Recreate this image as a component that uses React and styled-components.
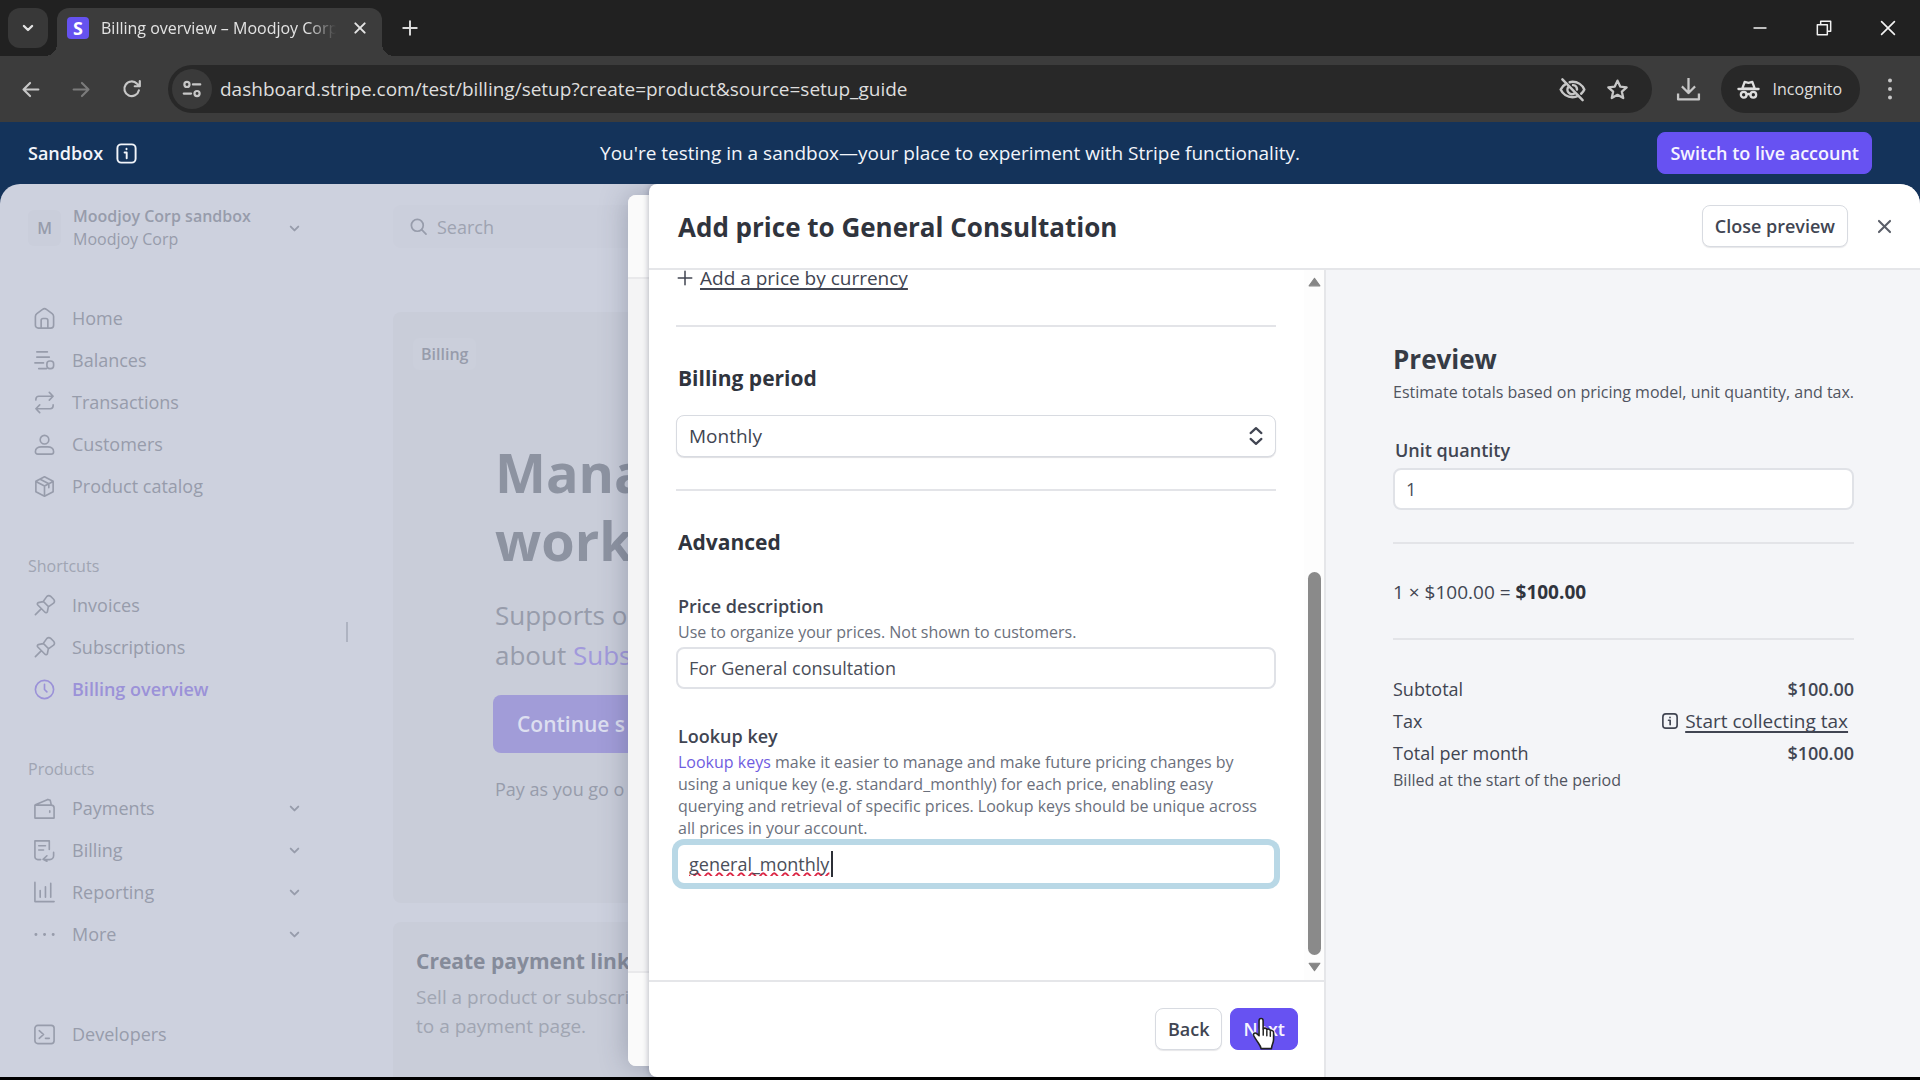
import React from "react";
import styled, { createGlobalStyle, css } from "styled-components";

const GlobalStyle = createGlobalStyle`
  *, *::before, *::after { box-sizing: border-box; }
  html, body { margin: 0; height: 100%; background: #000; }
  body, button, input, select {
    font-family: "Open Sans", "Noto Sans", sans-serif;
    font-size: 18px;
    line-height: 24px;
  }
  button, input, select { margin: 0; }
  h1, h2, h3, p, ul { margin: 0; padding: 0; }
  ul { list-style: none; }
  a { color: inherit; text-decoration: none; }
`;

const Svg = styled.svg.attrs({ "aria-hidden": true })`
  width: ${(p) => p.$size || 24}px;
  height: ${(p) => p.$size || 24}px;
  flex: none;
  display: block;
  fill: none;
  stroke: currentColor;
  stroke-width: ${(p) => p.$stroke || 2};
  stroke-linecap: ${(p) => p.$cap || "round"};
  stroke-linejoin: round;
`;

const Window = styled.div`
  height: 100vh;
  min-height: 720px;
  display: flex;
  flex-direction: column;
  overflow: hidden;
  border-bottom: 3px solid #000;
  background: #14335a;
`;

/* ---------- browser frame ---------- */

const IconButton = styled.button`
  display: grid;
  place-items: center;
  flex: none;
  width: ${(p) => p.$size || 40}px;
  height: ${(p) => p.$size || 40}px;
  padding: 0;
  border: 0;
  border-radius: ${(p) => p.$radius || 20}px;
  background: ${(p) => p.$bg || "transparent"};
  color: ${(p) => p.$color || "#c7c7c7"};
`;

const TabStrip = styled.div`
  flex: none;
  height: 56px;
  display: flex;
  align-items: flex-start;
  padding: 8px 0 0 8px;
  background: #212121;
`;

const Tab = styled.div`
  position: relative;
  display: flex;
  align-items: center;
  gap: 12px;
  width: 325px;
  height: 48px;
  margin: 0 8px 0 9px;
  padding: 0 10px 8px 10px;
  border-radius: 12px 12px 0 0;
  background: #3c3c3c;
  &::before,
  &::after {
    content: "";
    position: absolute;
    bottom: 0;
    width: 12px;
    height: 12px;
  }
  &::before {
    left: -12px;
    background: radial-gradient(circle at 0 0, transparent 12px, #3c3c3c 12px);
  }
  &::after {
    right: -12px;
    background: radial-gradient(circle at 100% 0, transparent 12px, #3c3c3c 12px);
  }
`;

const Favicon = styled.span`
  display: grid;
  place-items: center;
  flex: none;
  width: 22px;
  height: 22px;
  border-radius: 4px;
  background: #6552f0;
  color: #fff;
  font-size: 18px;
  font-weight: 700;
  line-height: 20px;
`;

const TabTitle = styled.span`
  flex: 1;
  overflow: hidden;
  white-space: nowrap;
  color: #e3e3e3;
  font-size: 16px;
  mask-image: linear-gradient(90deg, #000 88%, transparent);
`;

const WindowControls = styled.div`
  display: flex;
  gap: 24px;
  margin-left: auto;
  padding-right: 12px;
`;

const Toolbar = styled.div`
  flex: none;
  height: 66px;
  display: flex;
  align-items: center;
  padding: 0 10px;
  background: #3c3c3c;
`;

const NavButtons = styled.div`
  display: flex;
  gap: 11px;
  margin-right: 16px;
`;

const Omnibox = styled.div`
  flex: 1;
  min-width: 0;
  display: flex;
  align-items: center;
  height: 48px;
  margin-right: 13px;
  padding: 0 12px 0 4px;
  border-radius: 24px;
  background: #282828;
`;

const Address = styled.input`
  flex: 1;
  min-width: 0;
  padding: 0 0 0 8px;
  border: 0;
  outline: 0;
  background: transparent;
  color: #dedede;
  font-size: 19px;
`;

const Incognito = styled.button`
  display: flex;
  align-items: center;
  gap: 13px;
  height: 48px;
  margin: 0 10px 0 8px;
  padding: 0 18px 0 16px;
  border: 0;
  border-radius: 24px;
  background: #282828;
  color: #dedede;
  font-size: 16px;
`;

/* ---------- sandbox banner ---------- */

const Banner = styled.div`
  flex: none;
  height: 62px;
  display: grid;
  grid-template-columns: 1fr auto 1fr;
  align-items: center;
  padding: 0 48px 0 28px;
  color: #f2f5fa;
  font-size: 19px;
`;

const BannerTag = styled.div`
  display: flex;
  align-items: center;
  gap: 12px;
  font-size: 18px;
  font-weight: 600;
`;

const Button = styled.button`
  height: 42px;
  padding: 0 12px;
  border: 1px solid #d8dbe1;
  border-radius: 8px;
  background: #fff;
  color: #414552;
  font-weight: 600;
  white-space: nowrap;
  box-shadow: 0 1px 1px rgba(20, 20, 40, 0.1);
  ${(p) =>
    p.$primary &&
    css`
      border-color: #6752f2;
      background: #6752f2;
      color: #f6f4ff;
      box-shadow: none;
    `}
`;

const BannerAction = styled.div`
  justify-self: end;
`;

/* ---------- dashboard behind the drawers ---------- */

const Stage = styled.div`
  position: relative;
  flex: 1;
  min-height: 0;
  display: grid;
  grid-template-columns: 332px 1fr;
  overflow: hidden;
  border-radius: 20px 20px 0 0;
  background: #cdd1de;
  color: #979cab;
`;

const Sidebar = styled.nav`
  position: relative;
  display: flex;
  flex-direction: column;
  padding: 21px 24px 22px 28px;
`;

const Resizer = styled.span`
  position: absolute;
  right: -16px;
  top: 49%;
  width: 2px;
  height: 20px;
  background: #aeb3c1;
`;

const Account = styled.button`
  display: flex;
  align-items: center;
  gap: 12px;
  padding: 0;
  border: 0;
  background: transparent;
  color: inherit;
  text-align: left;
  margin-bottom: 46px;
`;

const Avatar = styled.span`
  display: grid;
  place-items: center;
  width: 33px;
  height: 36px;
  border-radius: 6px;
  background: #cacedb;
  font-size: 16px;
  font-weight: 600;
`;

const AccountNames = styled.span`
  flex: 1;
  display: flex;
  flex-direction: column;
  font-size: 16px;
  line-height: 23px;
  strong {
    font-weight: 600;
  }
`;

const NavLabel = styled.h3`
  font-size: 16px;
  font-weight: 400;
  line-height: 24px;
  margin: 47px 0 6px;
  color: #a0a5b3;
`;

const NavLink = styled.a`
  display: flex;
  align-items: center;
  gap: 16px;
  height: 42px;
  padding: 0 0 0 5px;
  color: ${(p) => (p.$active ? "#9b92d8" : "inherit")};
  font-weight: ${(p) => (p.$active ? 600 : 400)};
  span {
    flex: 1;
  }
`;

const NavFoot = styled.ul`
  margin-top: auto;
`;

const Chevron = styled.div`
  width: 14px;
  margin-right: 6px;
`;

const Main = styled.main`
  padding: 21px 60px 0 61px;
  display: flex;
  flex-direction: column;
  white-space: nowrap;
`;

const SearchBox = styled.label`
  display: flex;
  align-items: center;
  gap: 9px;
  flex: none;
  width: 480px;
  height: 43px;
  padding: 0 16px;
  border-radius: 8px;
  background: #cbcfdc;
  input {
    flex: 1;
    min-width: 0;
    border: 0;
    padding: 0;
    background: transparent;
    color: inherit;
  }
  input::placeholder {
    color: #9ea3b1;
    opacity: 1;
  }
`;

const Hero = styled.section`
  flex: none;
  height: 591px;
  margin: 64px 0 19px;
  padding: 26px 102px 0 20px;
  border-radius: 8px;
  background: #c9cdd9;
`;

const Badge = styled.span`
  display: inline-block;
  padding: 4px 8px;
  border-radius: 6px;
  background: #cbcfdb;
  font-size: 16px;
  font-weight: 600;
`;

const HeroBody = styled.div`
  padding: 68px 0 0 82px;
`;

const HeroTitle = styled.h1`
  color: #8d93a1;
  font-size: 54px;
  line-height: 68px;
  font-weight: 700;
`;

const HeroText = styled.p`
  margin: 21px 0 20px;
  font-size: 26px;
  line-height: 40px;
  a {
    color: #a199dc;
  }
`;

const HeroButton = styled.button`
  display: block;
  height: 58px;
  margin-left: -2px;
  padding: 0 24px;
  border: 0;
  border-radius: 8px;
  background: #a19cd8;
  color: #dddff0;
  font-size: 21px;
  font-weight: 600;
`;

const HeroNote = styled.p`
  margin-top: 24px;
`;

const LinkCard = styled.section`
  flex: 1;
  padding: 25px 23px;
  border-radius: 8px 8px 0 0;
  background: #c9cdd9;
  h2 {
    color: #858b9a;
    font-size: 21px;
    line-height: 28px;
    font-weight: 700;
    margin-bottom: 8px;
  }
  p {
    font-size: 19px;
    line-height: 29px;
    color: #a0a5b2;
  }
`;

/* ---------- drawers ---------- */

const BackDrawer = styled.div`
  position: absolute;
  top: 11px;
  bottom: 11px;
  left: 628px;
  right: 21px;
  display: flex;
  flex-direction: column;
  border-radius: 8px;
  background: #f4f4f5;
  box-shadow: 0 0 28px rgba(60, 66, 90, 0.34);
  &::before,
  &::after {
    content: "";
    background: #fafafa;
  }
  &::before {
    height: 84px;
    border-radius: 8px 8px 0 0;
    border-bottom: 2px solid #e9e9eb;
  }
  &::after {
    height: 95px;
    margin-top: auto;
    border-radius: 0 0 8px 8px;
    border-top: 2px solid #e9e9eb;
  }
`;

const Drawer = styled.section`
  position: absolute;
  top: 0;
  bottom: 0;
  left: 649px;
  right: 0;
  display: flex;
  flex-direction: column;
  overflow: hidden;
  border-radius: 8px 16px 0 8px;
  background: #fff;
  box-shadow: 0 0 6px rgba(60, 66, 90, 0.4);
  color: #414552;
`;

const DrawerHeader = styled.header`
  flex: none;
  display: flex;
  align-items: center;
  gap: 16px;
  height: 86px;
  padding: 0 16px 0 29px;
  border-bottom: 2px solid #e5e6e9;
  h2 {
    flex: 1;
    padding-top: 2px;
    color: #30343d;
    font-size: 26px;
    line-height: 34px;
    font-weight: 700;
  }
`;

const DrawerBody = styled.div`
  flex: 1;
  min-height: 0;
  display: grid;
  grid-template-columns: 677px 1fr;
`;

const FormPane = styled.div`
  display: flex;
  flex-direction: column;
  min-height: 0;
  border-right: 2px solid #e5e6e9;
`;

const ScrollRegion = styled.div`
  flex: 1;
  min-height: 0;
  display: flex;
  overflow: hidden;
`;

const Form = styled.form`
  flex: 1;
  padding: 0 28px 0 27px;
`;

const ScrollTrack = styled.div`
  flex: none;
  width: 20px;
  display: flex;
  flex-direction: column;
  align-items: center;
  padding: 5px 0 6px;
  background: #fdfdfd;
  color: #868686;
`;

const ScrollThumb = styled.span`
  width: 13px;
  height: 383px;
  margin: auto 0 6px;
  border-radius: 7px;
  background: #8a8a8a;
`;

const linkUnderline = css`
  text-decoration: underline 2px;
  text-underline-offset: 3px;
  text-decoration-skip-ink: none;
`;

const AddCurrency = styled.a`
  display: flex;
  align-items: center;
  gap: 6px;
  height: 16px;
  margin-bottom: 39px;
  font-size: 19px;
  line-height: 16px;
  span {
    ${linkUnderline}
  }
`;

const Divider = styled.hr`
  height: 2px;
  margin: ${(p) => p.$before || 0}px 0 0;
  border: 0;
  background: #e3e4e8;
`;

const SectionTitle = styled.h3`
  padding-left: 2px;
  color: #30343d;
  font-size: 21px;
  line-height: 28px;
  font-weight: 700;
  margin: 37px 0 ${(p) => p.$after}px;
`;

const Field = styled.div`
  display: flex;
  flex-direction: column;
  margin-bottom: ${(p) => p.$after || 0}px;
`;

const Label = styled.label`
  padding: 0 0 ${(p) => p.$gap || 0}px 2px;
  line-height: 26px;
  font-weight: 600;
`;

const Help = styled.p`
  padding: 2px 0 4px 2px;
  color: #6b707c;
  font-size: 16px;
  line-height: 22px;
  a {
    color: #6f5de0;
  }
`;

const TextInput = styled.input`
  width: 100%;
  height: 42px;
  padding: 0 11px;
  border: 2px solid #e0e2e7;
  border-radius: 8px;
  outline: 0;
  background: #fff;
  color: #4a4e59;
  ${(p) =>
    p.$focused &&
    css`
      border-color: #b9d8e6;
      box-shadow: 0 0 0 4px #b9d8e6;
      text-decoration: underline wavy #dc2846 2px;
      text-underline-offset: 1px;
      text-decoration-skip-ink: none;
    `}
`;

const InputWrap = styled.div`
  position: relative;
`;

const Caret = styled.span`
  position: absolute;
  left: 155px;
  top: 8px;
  width: 2px;
  height: 26px;
  background: #2c2f36;
`;

const SelectWrap = styled.div`
  position: relative;
  svg {
    position: absolute;
    right: 10px;
    top: 11px;
    pointer-events: none;
  }
`;

const Select = styled.select`
  width: 100%;
  height: 42px;
  padding: 0 12px;
  appearance: none;
  border: 1px solid #d8dbe1;
  border-radius: 8px;
  background: #fff;
  color: #414552;
  font-size: 19px;
  box-shadow: 0 1px 1px rgba(20, 20, 40, 0.14);
`;

const FormFooter = styled.footer`
  flex: none;
  display: flex;
  justify-content: flex-end;
  align-items: flex-start;
  gap: 8px;
  height: 97px;
  padding: 26px 26px 0;
  border-top: 2px solid #e5e6e9;
`;

const NextWrap = styled.div`
  position: relative;
`;

const Pointer = styled(Svg)`
  position: absolute;
  left: 15px;
  top: 8px;
`;

const PreviewPane = styled.aside`
  padding: 72px 66px 0 67px;
  background: #f4f5f8;
  h2 {
    color: #363b45;
    font-size: 26px;
    line-height: 34px;
    font-weight: 700;
  }
`;

const Caption = styled.p`
  padding-top: ${(p) => p.$before || 0}px;
  margin-bottom: ${(p) => p.$after || 0}px;
  color: #50545f;
  font-size: 16px;
  line-height: 22px;
  white-space: nowrap;
`;

const Equation = styled.p`
  margin: 35px 0 33px;
  font-size: 19px;
  line-height: 26px;
  strong {
    color: #30343d;
  }
`;

const Totals = styled.table`
  width: 100%;
  margin-top: 33px;
  border-collapse: collapse;
  line-height: 32px;
  th,
  td {
    padding: 0;
    font-weight: 400;
    text-align: left;
    vertical-align: top;
  }
  td {
    text-align: right;
    font-weight: 600;
  }
`;

const TaxLink = styled.a`
  display: inline-flex;
  align-items: center;
  gap: 6px;
  margin-right: 6px;
  font-weight: 400;
  vertical-align: top;
  span {
    font-size: 19px;
    ${linkUnderline}
  }
`;

/* ---------- icons ---------- */

const paths = {
  chevron: <path d="M5 8.500l7 7 7-7" />,
  close: <path d="M5 5l14 14M19 5L5 19" />,
  plus: <path d="M12 3v18M3 12h18" />,
  minus: <path d="M4 12h16" />,
  restore: <path d="M4 8h12v12H4zM8 8V4h12v12h-4" />,
  back: <path d="M21 12H4M11.500 4.500L4 12l7.500 7.500" />,
  forward: <path d="M3 12h17M12.500 4.500L20 12l-7.500 7.500" />,
  reload: <path d="M19.500 13.500a8 8 0 1 1-2-7.200L20.500 9M20.500 3.500V9H15" />,
  tune: (
    <>
      <circle cx="6.500" cy="7" r="2.800" />
      <path d="M13 7h8M3 17h8" />
      <circle cx="17.500" cy="17" r="2.800" />
    </>
  ),
  eyeOff: (
    <>
      <path d="M6.500 6.800C4 8.200 2.300 10.200 1.500 12c1.700 3.900 5.800 6.800 10.500 6.800 1.800 0 3.500-.4 5-1.200M9.500 5.500c.8-.2 1.600-.3 2.500-.3 4.700 0 8.800 2.900 10.500 6.800-.6 1.400-1.600 2.700-2.800 3.800" />
      <path d="M8.500 9.500a4 4 0 0 0 5.800 5.500M12.500 8.100a4 4 0 0 1 3.500 4M3 3l18 18.500" />
    </>
  ),
  star: <path d="M12 3.500l2.600 5.700 6.200.7-4.600 4.200 1.300 6.100L12 17.100l-5.500 3.100 1.300-6.100-4.600-4.200 6.200-.7z" />,
  download: <path d="M12 2v13M6.500 9.800l5.500 5.500 5.500-5.500M2 17v4.500h20V17" />,
  incognito: (
    <>
      <path d="M1.500 11.500h21" />
      <path d="M5.500 11L8 4l4 1 4-1 2.500 7z" />
      <circle cx="7" cy="17.500" r="3" />
      <circle cx="17" cy="17.500" r="3" />
      <path d="M10 17.200c1.300-.7 2.700-.7 4 0" />
    </>
  ),
  info: (
    <>
      <rect x="2.500" y="2.500" width="19" height="19" rx="4" />
      <path d="M10 11h2.200v6M12 7v.6" />
    </>
  ),
  search: (
    <>
      <circle cx="10.500" cy="10.500" r="7.500" />
      <path d="M16 16l5.500 5.500" />
    </>
  ),
  home: <path d="M2.500 10a4 4 0 0 1 1.500-3l6-4.500a3 3 0 0 1 4 0l6 4.500a4 4 0 0 1 1.500 3v9a3 3 0 0 1-3 3h-13a3 3 0 0 1-3-3zM8.500 22v-8a2 2 0 0 1 2-2h3a2 2 0 0 1 2 2v8" />,
  balances: (
    <>
      <path d="M4 3h11M4 8.500h13M2 14.500h9M6 20.500h8" />
      <rect x="14.500" y="12.500" width="7" height="8" rx="3" />
    </>
  ),
  transactions: <path d="M3 9.500V8.500a3 3 0 0 1 3-3h15M17 1.500l4 4-4 4M21 14.500v1a3 3 0 0 1-3 3H3M7 14.500l-4 4 4 4" />,
  customers: (
    <>
      <circle cx="12" cy="7" r="4.500" />
      <path d="M2.500 19.500c0-3.500 3.200-5 6-5h7c2.800 0 6 1.500 6 5 0 1.500-1 2.500-2.500 2.500H5c-1.500 0-2.500-1-2.500-2.500z" />
    </>
  ),
  box: <path d="M12 1.800l9 4.700v11L12 22.200l-9-4.700v-11zM3.500 7L12 11.500 20.500 7M12 11.500V22M7.500 4.500l9 4.700v4" />,
  pin: <path d="M14.500 2.500a3 3 0 0 1 4 0l3 3a3 3 0 0 1 0 4L16 13.500l-1 5a1.500 1.500 0 0 1-2.500.5L5 11.500A1.500 1.500 0 0 1 5.500 9l5-1zM8.500 15.500L2.500 21.500M11 8l5 5" />,
  clock: (
    <>
      <circle cx="12" cy="12" r="9.500" />
      <path d="M12 6.500V12l2.500 2.500" />
    </>
  ),
  wallet: (
    <>
      <path d="M2 8.500h17a3 3 0 0 1 3 3V22H2zM2.500 8l13-5.500 2.500 1L19 8" />
      <path d="M17.500 14.500v1.500" />
    </>
  ),
  billing: <path d="M8 21.500H5a3 3 0 0 1-3-3V2h15v9M6 7h7M6 11.500h5M11 21.500h6.500a4 4 0 0 0 4-4V14M14.500 17.500l-4 3.700 4 2" />,
  report: <path d="M2 1.500v20h20M7.500 17v-7M13 17V6M18.500 17V2.500" />,
  more: <path d="M3 12h.1M12 12h.1M21 12h.1" />,
  terminal: (
    <>
      <rect x="2" y="2.500" width="20" height="19" rx="3" />
      <path d="M6.500 8l4.500 4-4.500 4M13 16h4" />
    </>
  ),
  updown: <path d="M5.500 8.500L12 2.500l6.500 6M5.500 15.500L12 21.500l6.500-6" />,
  kebab: <path d="M12 3.500v.1M12 12v.1M12 20.500v.1" />,
};

function Icon({ name, size, stroke, cap }) {
  return (
    <Svg viewBox="0 0 24 24" $size={size} $stroke={stroke} $cap={cap}>
      {paths[name]}
    </Svg>
  );
}

function NavItem({ icon, label, active, expandable }) {
  return (
    <li>
      <NavLink href="#" $active={active}>
        <Icon name={icon} size={23} stroke={icon === "more" ? 3 : 1.7} />
        <span>{label}</span>
        {expandable && (
          <Chevron>
            <Icon name="chevron" size={13} stroke={3.5} />
          </Chevron>
        )}
      </NavLink>
    </li>
  );
}

function BrowserFrame() {
  return (
    <>
      <TabStrip>
        <IconButton $bg="#383838" $radius={12} $color="#e3e3e3" aria-label="Search tabs">
          <Icon name="chevron" size={14} stroke={4} />
        </IconButton>
        <Tab>
          <Favicon>S</Favicon>
          <TabTitle>Billing overview – Moodjoy Corp</TabTitle>
          <IconButton $size={24} $color="#e3e3e3" aria-label="Close tab">
            <Icon name="close" size={16} stroke={3} />
          </IconButton>
        </Tab>
        <IconButton aria-label="New tab" $color="#dcdcdc">
          <Icon name="plus" size={18} stroke={2.6} />
        </IconButton>
        <WindowControls>
          <IconButton aria-label="Minimize" $color="#f2f2f2">
            <Icon name="minus" size={18} stroke={1.8} />
          </IconButton>
          <IconButton aria-label="Restore" $color="#f2f2f2">
            <Icon name="restore" size={20} stroke={1.8} />
          </IconButton>
          <IconButton aria-label="Close window" $color="#f2f2f2">
            <Icon name="close" size={22} stroke={1.8} />
          </IconButton>
        </WindowControls>
      </TabStrip>
      <Toolbar>
        <NavButtons>
          <IconButton aria-label="Back">
            <Icon name="back" size={21} stroke={2.4} />
          </IconButton>
          <IconButton aria-label="Forward" $color="#7b7b7b">
            <Icon name="forward" size={21} stroke={2.4} />
          </IconButton>
          <IconButton aria-label="Reload">
            <Icon name="reload" size={22} stroke={2.4} />
          </IconButton>
        </NavButtons>
        <Omnibox>
          <IconButton $bg="#3a3a3a" aria-label="Site information">
            <Icon name="tune" size={22} stroke={2.4} />
          </IconButton>
          <Address
            aria-label="Address"
            readOnly
            value="dashboard.stripe.com/test/billing/setup?create=product&source=setup_guide"
          />
          <IconButton $size={45} aria-label="Third-party cookies blocked">
            <Icon name="eyeOff" size={27} stroke={2.2} />
          </IconButton>
          <IconButton $size={45} aria-label="Bookmark this tab">
            <Icon name="star" size={25} stroke={2.2} />
          </IconButton>
        </Omnibox>
        <IconButton $size={48} aria-label="Downloads">
          <Icon name="download" size={25} stroke={2.2} cap="square" />
        </IconButton>
        <Incognito>
          <Icon name="incognito" size={23} stroke={2.4} />
          Incognito
        </Incognito>
        <IconButton aria-label="Menu">
          <Icon name="kebab" size={24} stroke={4} />
        </IconButton>
      </Toolbar>
    </>
  );
}

function Dashboard() {
  return (
    <>
      <Sidebar>
        <Account>
          <Avatar>M</Avatar>
          <AccountNames>
            <strong>Moodjoy Corp sandbox</strong>
            <span>Moodjoy Corp</span>
          </AccountNames>
          <Chevron>
            <Icon name="chevron" size={13} stroke={3.5} />
          </Chevron>
        </Account>
        <ul>
          <NavItem icon="home" label="Home" />
          <NavItem icon="balances" label="Balances" />
          <NavItem icon="transactions" label="Transactions" />
          <NavItem icon="customers" label="Customers" />
          <NavItem icon="box" label="Product catalog" />
        </ul>
        <NavLabel>Shortcuts</NavLabel>
        <ul>
          <NavItem icon="pin" label="Invoices" />
          <NavItem icon="pin" label="Subscriptions" />
          <NavItem icon="clock" label="Billing overview" active />
        </ul>
        <NavLabel>Products</NavLabel>
        <ul>
          <NavItem icon="wallet" label="Payments" expandable />
          <NavItem icon="billing" label="Billing" expandable />
          <NavItem icon="report" label="Reporting" expandable />
          <NavItem icon="more" label="More" expandable />
        </ul>
        <NavFoot>
          <NavItem icon="terminal" label="Developers" />
        </NavFoot>
        <Resizer />
      </Sidebar>
      <Main>
        <SearchBox>
          <Icon name="search" size={19} stroke={2.2} />
          <input type="search" placeholder="Search" aria-label="Search" />
        </SearchBox>
        <Hero>
          <Badge>Billing</Badge>
          <HeroBody>
            <HeroTitle>
              Mana
              <br />
              work
            </HeroTitle>
            <HeroText>
              Supports o
              <br />
              about <a href="#">Subs</a>
            </HeroText>
            <HeroButton>Continue s</HeroButton>
            <HeroNote>Pay as you go o</HeroNote>
          </HeroBody>
        </Hero>
        <LinkCard>
          <h2>Create payment link</h2>
          <p>
            Sell a product or subscri
            <br />
            to a payment page.
          </p>
        </LinkCard>
      </Main>
    </>
  );
}

function PriceForm() {
  return (
    <FormPane>
      <ScrollRegion>
        <Form id="price">
          <AddCurrency href="#">
            <Icon name="plus" size={18} stroke={2} />
            <span>Add a price by currency</span>
          </AddCurrency>
          <Divider />
          <SectionTitle $after={23}>Billing period</SectionTitle>
          <SelectWrap>
            <Select aria-label="Billing period" defaultValue="Monthly">
              <option>Monthly</option>
            </Select>
            <Icon name="updown" size={20} stroke={2.6} />
          </SelectWrap>
          <Divider $before={32} />
          <SectionTitle $after={37}>Advanced</SectionTitle>
          <Field $after={34}>
            <Label htmlFor="description">Price description</Label>
            <Help>Use to organize your prices. Not shown to customers.</Help>
            <TextInput id="description" defaultValue="For General consultation" />
          </Field>
          <Field>
            <Label htmlFor="lookup">Lookup key</Label>
            <Help>
              <a href="#">Lookup keys</a> make it easier to manage and make future pricing changes by
              using a unique key (e.g. standard_monthly) for each price, enabling easy querying and
              retrieval of specific prices. Lookup keys should be unique across all prices in your
              account.
            </Help>
            <InputWrap>
              <TextInput id="lookup" defaultValue="general_monthly" spellCheck={false} $focused />
              <Caret />
            </InputWrap>
          </Field>
        </Form>
        <ScrollTrack>
          <Svg viewBox="0 0 12 12" $size={13} $stroke={1}>
            <path d="M6 3l5 7H1z" fill="currentColor" />
          </Svg>
          <ScrollThumb />
          <Svg viewBox="0 0 12 12" $size={13} $stroke={1}>
            <path d="M6 9l5-7H1z" fill="currentColor" />
          </Svg>
        </ScrollTrack>
      </ScrollRegion>
      <FormFooter>
        <Button>Back</Button>
        <NextWrap>
          <Button $primary>Next</Button>
          <Pointer viewBox="0 0 24 32" $size={36}>
            <path
              d="M8.500 17.500V4.200c0-2.700 3.600-2.700 3.600 0v7.300c.9-1.200 3-.9 3.300.6.9-.9 2.900-.5 3.100 1 .9-.7 2.900-.2 2.900 1.800v6c0 3-1.600 4.400-1.900 8.100H10.300c-.5-3-2.500-4.800-4-7.300-1-1.700-2.300-3.300-2.700-4.700-.4-1.600 1.600-2.500 2.800-1.300z"
              fill="#fff"
              stroke="#222"
              strokeWidth="1.400"
            />
            <path d="M12.200 12v5M15.400 13v4.500M18.500 14v4" stroke="#222" strokeWidth="1.300" />
          </Pointer>
        </NextWrap>
      </FormFooter>
    </FormPane>
  );
}

function Preview() {
  return (
    <PreviewPane>
      <h2>Preview</h2>
      <Caption $before={5} $after={34}>
        Estimate totals based on pricing model, unit quantity, and tax.
      </Caption>
      <Field $after={32}>
        <Label htmlFor="quantity" $gap={5}>
          Unit quantity
        </Label>
        <TextInput id="quantity" defaultValue="1" />
      </Field>
      <Divider />
      <Equation>
        1 × $100.00 = <strong>$100.00</strong>
      </Equation>
      <Divider />
      <Totals>
        <tbody>
          <tr>
            <th scope="row">Subtotal</th>
            <td>$100.00</td>
          </tr>
          <tr>
            <th scope="row">Tax</th>
            <td>
              <TaxLink href="#">
                <Icon name="info" size={18} stroke={2.2} />
                <span>Start collecting tax</span>
              </TaxLink>
            </td>
          </tr>
          <tr>
            <th scope="row">Total per month</th>
            <td>$100.00</td>
          </tr>
        </tbody>
      </Totals>
      <Caption>Billed at the start of the period</Caption>
    </PreviewPane>
  );
}

export default function App() {
  return (
    <Window>
      <GlobalStyle />
      <BrowserFrame />
      <Banner>
        <BannerTag>
          Sandbox
          <Icon name="info" size={23} stroke={2} />
        </BannerTag>
        <span>You're testing in a sandbox—your place to experiment with Stripe functionality.</span>
        <BannerAction>
          <Button $primary>Switch to live account</Button>
        </BannerAction>
      </Banner>
      <Stage>
        <Dashboard />
        <BackDrawer />
        <Drawer>
          <DrawerHeader>
            <h2>Add price to General Consultation</h2>
            <Button>Close preview</Button>
            <IconButton aria-label="Close" $color="#5a5e68">
              <Icon name="close" size={19} stroke={2.6} />
            </IconButton>
          </DrawerHeader>
          <DrawerBody>
            <PriceForm />
            <Preview />
          </DrawerBody>
        </Drawer>
      </Stage>
    </Window>
  );
}
